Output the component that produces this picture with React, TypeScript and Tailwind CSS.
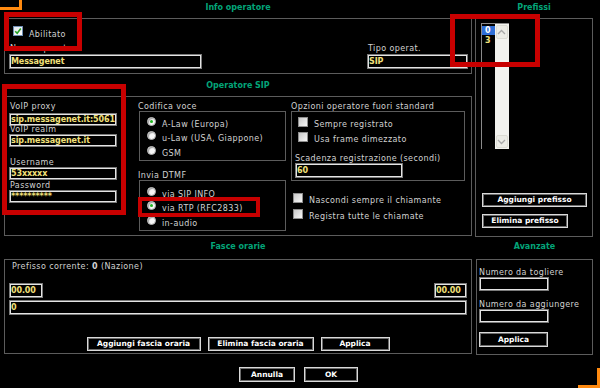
import React from "react";

const lbl = "text-[8px] leading-[9px] tracking-[0.4px] text-[#d2d2d2] whitespace-nowrap";
const head = "text-[8px] leading-[9px] font-bold text-[#03a579] text-center whitespace-nowrap";
const frame = "border border-[#5c5c5c]";

function Field({ className = "", value = "" }: { className?: string; value?: string }) {
  return (
    <div
      className={`border border-[#7a7a7a] shadow-[inset_0_0_0_1px_#e4e4e4] bg-black pl-[1px] text-[8px] leading-none font-bold tracking-[-0.1px] text-[#f2e07a] whitespace-nowrap overflow-hidden flex items-center ${className}`}
    >
      {value}
    </div>
  );
}

function Btn({ className = "", children }: { className?: string; children: React.ReactNode }) {
  return (
    <div
      className={`border border-[#dadada] shadow-[inset_0_0_0_1px_#6c6c6c] bg-black text-white font-bold text-[7.5px] leading-none flex items-center justify-center whitespace-nowrap ${className}`}
    >
      {children}
    </div>
  );
}

function Check({ on = false }: { on?: boolean }) {
  if (on) {
    return (
      <div className="w-[10px] h-[10px] shrink-0 border border-[#6f8fb4] bg-linear-to-br from-[#e2e8ee] to-[#ffffff] flex items-center justify-center">
        <svg width="8" height="8" viewBox="0 0 8 8">
          <path d="M1.2 4.2 L3.2 6.2 L6.8 1.6" stroke="#22a022" strokeWidth="1.6" fill="none" />
        </svg>
      </div>
    );
  }
  return (
    <div className="w-[10px] h-[10px] shrink-0 border border-[#8e8e8e] bg-linear-to-br from-[#c9c9c9] to-[#f7f7f7]" />
  );
}

function Radio({ on = false }: { on?: boolean }) {
  return (
    <div className="w-[9px] h-[9px] shrink-0 rounded-full bg-[#f6f6f6] border border-[#b0b0b0] shadow-[inset_1px_1px_1px_#a0a0a0] flex items-center justify-center">
      {on && <div className="w-[3px] h-[3px] rounded-full bg-[#1fb41f]" />}
    </div>
  );
}

function RadioRow({ on = false, children }: { on?: boolean; children: React.ReactNode }) {
  return (
    <div className="flex items-start h-[15px]">
      <Radio on={on} />
      <div className={`${lbl} ml-[6px] mt-[3px]`}>{children}</div>
    </div>
  );
}

function CheckRow({ children, h = "h-[15px]" }: { children: React.ReactNode; h?: string }) {
  return (
    <div className={`flex items-start ${h}`}>
      <Check />
      <div className={`${lbl} ml-[6px] mt-[3px]`}>{children}</div>
    </div>
  );
}

export default function App() {
  return (
    <div className="relative w-[600px] h-[388px] bg-black overflow-hidden [font-family:'DejaVu_Sans',Verdana,sans-serif]">
      {/* top area */}
      <div className="flex pl-[4px] gap-[3px] h-[237px]">
        <div className="w-[468px] flex flex-col">
          <div className={`${head} h-[18px] pt-[3px]`}>Info operatore</div>
          <div className={`${frame} h-[56px] flex justify-between`}>
            <div className="pl-[4px] pt-[7px] flex flex-col">
              <div className="flex items-start ml-[4px] h-[18px]">
                <Check on />
                <div className={`${lbl} ml-[6px] mt-[4px]`}>Abilitato</div>
              </div>
              <div className={`${lbl} pl-[1px]`}>Nome operatore</div>
              <Field className="mt-[1px] w-[193px] h-[15px]" value="Messagenet" />
            </div>
            <div className="pt-[25px] mr-[3px] flex flex-col w-[101px]">
              <div className={`${lbl} pl-[1px]`}>Tipo operat.</div>
              <Field className="mt-[1px] h-[15px]" value="SIP" />
            </div>
          </div>
          <div className={`${head} h-[22px] pt-[7px]`}>Operatore SIP</div>
          <div className={`${frame} h-[140px] flex`}>
            {/* col1 */}
            <div className="ml-[4px] w-[108px] pt-[5px] flex flex-col">
              <div className={`${lbl} pl-[1px]`}>VoIP proxy</div>
              <Field className="mt-[2px] h-[13px]" value="sip.messagenet.it:5061" />
              <div className={`${lbl} pl-[1px] mt-[-1px]`}>VoIP realm</div>
              <Field className="h-[13px]" value="sip.messagenet.it" />
              <div className={`${lbl} pl-[1px] mt-[11px]`}>Username</div>
              <Field className="h-[13px]" value="53xxxxx" />
              <div className={`${lbl} pl-[1px] mt-[1px]`}>Password</div>
              <Field className="h-[13px]" value="**********" />
            </div>
            {/* col2 */}
            <div className="ml-[21px] w-[148px] pt-[5px] flex flex-col">
              <div className={lbl}>Codifica voce</div>
              <div className={`${frame} ml-[1px] w-[147px] h-[50px] pt-[5px] pl-[7px] flex flex-col`}>
                <RadioRow on>A-Law (Europa)</RadioRow>
                <RadioRow>u-Law (USA, Giappone)</RadioRow>
                <RadioRow>GSM</RadioRow>
              </div>
              <div className={`${lbl} mt-[10px]`}>Invia DTMF</div>
              <div className={`${frame} ml-[1px] w-[147px] h-[51px] pt-[6px] pl-[7px] flex flex-col`}>
                <RadioRow>via SIP INFO</RadioRow>
                <RadioRow on>via RTP (RFC2833)</RadioRow>
                <RadioRow>in-audio</RadioRow>
              </div>
            </div>
            {/* col3 */}
            <div className="ml-[5px] w-[174px] pt-[5px] flex flex-col">
              <div className={lbl}>Opzioni operatore fuori standard</div>
              <div className={`${frame} h-[70px] pt-[5px] pl-[3px] flex flex-col`}>
                <div className="ml-[3px]">
                  <CheckRow>Sempre registrato</CheckRow>
                  <CheckRow>Usa frame dimezzato</CheckRow>
                </div>
                <div className={`${lbl} mt-[7px]`}>Scadenza registrazione (secondi)</div>
                <Field className="w-[108px] h-[15px]" value="60" />
              </div>
              <div className="mt-[12px] ml-[2px]">
                <CheckRow h="h-[16px]">Nascondi sempre il chiamante</CheckRow>
                <CheckRow h="h-[16px]">Registra tutte le chiamate</CheckRow>
              </div>
            </div>
          </div>
        </div>
        <div className="w-[118px] flex flex-col">
          <div className={`${head} h-[18px] pt-[3px]`}>Prefissi</div>
          <div className={`${frame} h-[219px] flex flex-col pl-[5px] pt-[4px]`}>
            <div className="w-[28px] h-[126px] flex border-l border-t border-[#8a8a8a]">
              <div className="w-[13px] pt-[2px] flex flex-col">
                <div className="h-[9px] bg-[#2f6fd6] text-white font-bold text-[8px] leading-[9px] pl-[3px]">0</div>
                <div className="h-[9px] text-[#f2e07a] font-bold text-[8px] leading-[9px] pl-[3px] mt-[1px]">3</div>
              </div>
              <div className="w-[15px] bg-[#f3f3ef] flex flex-col justify-between p-[1px]">
                <div className="h-[14px] bg-[#ecece6] border border-[#dcdcd4] rounded-[2px] flex items-center justify-center">
                  <svg width="9" height="6" viewBox="0 0 9 6">
                    <path d="M1 5 L4.5 1.5 L8 5" stroke="#a8a8a8" strokeWidth="1.3" fill="none" />
                  </svg>
                </div>
                <div className="h-[13px] bg-[#ecece6] border border-[#dcdcd4] rounded-[2px] flex items-center justify-center">
                  <svg width="9" height="6" viewBox="0 0 9 6">
                    <path d="M1 1 L4.5 4.5 L8 1" stroke="#a8a8a8" strokeWidth="1.3" fill="none" />
                  </svg>
                </div>
              </div>
            </div>
            <Btn className="mt-[44px] ml-[1px] w-[105px] h-[14px]">Aggiungi prefisso</Btn>
            <Btn className="mt-[7px] ml-[1px] w-[86px] h-[14px]">Elimina prefisso</Btn>
          </div>
        </div>
      </div>

      {/* bottom area */}
      <div className="flex pl-[4px] gap-[4px] h-[118px]">
        <div className="w-[468px] flex flex-col">
          <div className={`${head} h-[22px] pt-[5px]`}>Fasce orarie</div>
          <div className={`${frame} h-[95px] pt-[2px] flex flex-col`}>
            <div className={`${lbl} ml-[7px]`}>
              Prefisso corrente: <span className="font-bold">0</span> (Nazione)
            </div>
            <div className="flex justify-between mt-[12px] px-[4px]">
              <Field className="w-[34px] h-[15px]" value="00.00" />
              <Field className="w-[33px] h-[15px]" value="00.00" />
            </div>
            <Field className="mt-[2px] mx-[4px] h-[15px]" value="0" />
            <div className="flex justify-center gap-[7px] mt-[22px]">
              <Btn className="w-[114px] h-[14px]">Aggiungi fascia oraria</Btn>
              <Btn className="w-[106px] h-[14px]">Elimina fascia oraria</Btn>
              <Btn className="w-[69px] h-[14px]">Applica</Btn>
            </div>
          </div>
        </div>
        <div className="w-[117px] flex flex-col">
          <div className={`${head} h-[22px] pt-[5px]`}>Avanzate</div>
          <div className={`${frame} h-[96px] pl-[2px] pt-[8px] flex flex-col`}>
            <div className={lbl}>Numero da togliere</div>
            <Field className="w-[70px] h-[14px]" />
            <div className={`${lbl} mt-[9px]`}>Numero da aggiungere</div>
            <Field className="w-[70px] h-[14px]" />
            <Btn className="mt-[9px] w-[69px] h-[15px]">Applica</Btn>
          </div>
        </div>
      </div>

      {/* dialog buttons */}
      <div className="flex justify-center gap-[9px] mt-[12px] pr-[3px]">
        <Btn className="w-[56px] h-[15px]">Annulla</Btn>
        <Btn className="w-[54px] h-[15px]">OK</Btn>
      </div>

      {/* red highlight overlays */}
      <div className="absolute left-[4px] top-[12px] w-[78px] h-[39px] border-[5px] border-[#c80000]" />
      <div className="absolute left-[2px] top-[84px] w-[124px] h-[131px] border-[5px] border-[#c80000]" />
      <div className="absolute left-[450px] top-[14px] w-[90px] h-[53px] border-[5px] border-[#c80000]" />
      <div className="absolute left-[138px] top-[197px] w-[122px] h-[20px] border-[4px] border-[#c80000]" />

      {/* orange corners */}
      <div className="absolute left-0 top-0 w-[22px] h-[10px] border-r-[3px] border-b-[3px] border-[#ff8a10]" />
      <div className="absolute right-0 bottom-0 w-[22px] h-[20px] border-r-[3px] border-b-[3px] border-[#ff8a10]" />
    </div>
  );
}
